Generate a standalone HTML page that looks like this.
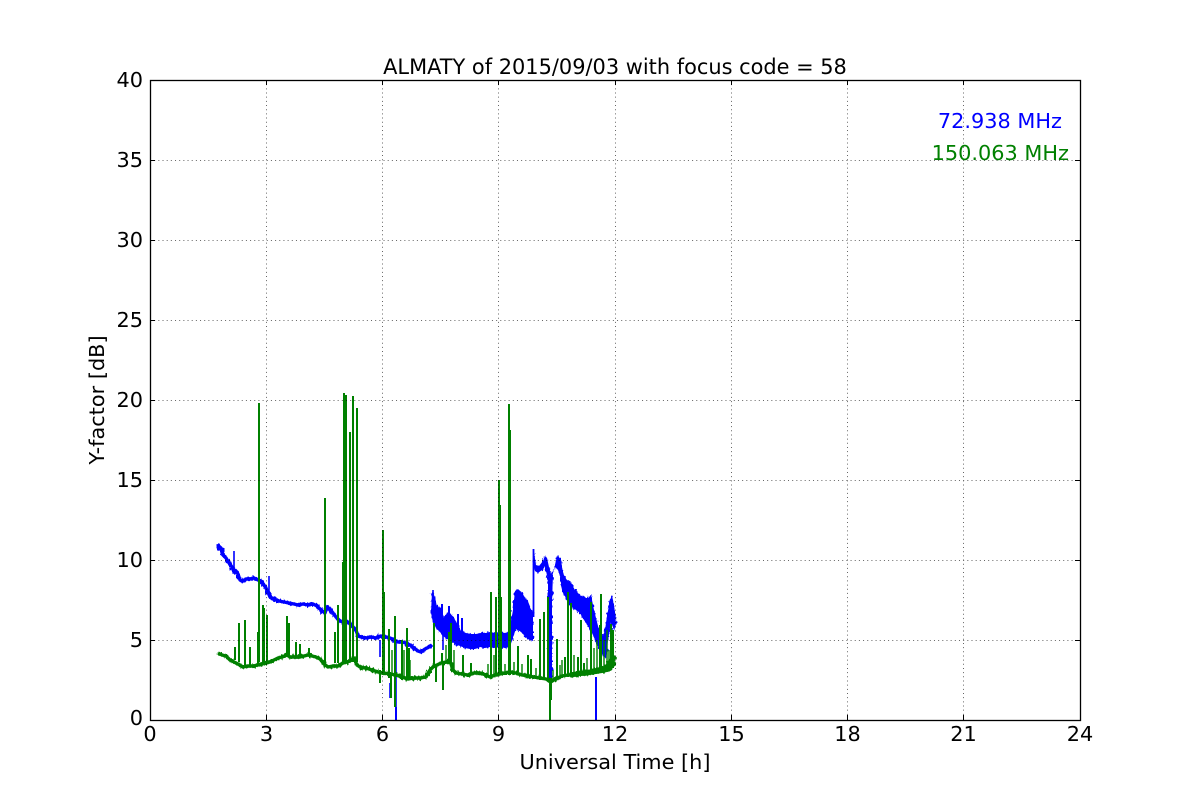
<!DOCTYPE html>
<html>
<head>
<meta charset="utf-8">
<style>
html,body{margin:0;padding:0;background:#fff;}
svg{display:block;}
text{font-family:"DejaVu Sans",sans-serif;fill:#000;}
</style>
</head>
<body>
<svg width="1200" height="800" viewBox="0 0 1200 800" xmlns="http://www.w3.org/2000/svg">
<defs>
<filter id="j" filterUnits="userSpaceOnUse" x="0" y="0" width="1200" height="800" color-interpolation-filters="sRGB">
<feTurbulence type="fractalNoise" baseFrequency="0.55 0.25" numOctaves="2" seed="4" result="n"/>
<feDisplacementMap in="SourceGraphic" in2="n" scale="6" xChannelSelector="R" yChannelSelector="G" result="d"/>
<feMerge><feMergeNode in="SourceGraphic"/><feMergeNode in="d"/></feMerge>
</filter>
</defs>
<rect width="1200" height="800" fill="#fff"/>

<!-- blue trace -->
<g filter="url(#j)">
<g fill="none" stroke="#0000ff" stroke-linejoin="round">
<path stroke-width="3.400" d="M218 544L219 549L221 548L223 555L226 558L229 563L232 567L234 572L236 571L238 574L240 580L243 581L246 579L250 579L254 578L258 580L261 581L264 585L267 590L270 597L274 599L279 601L284 602L289 603L294 604L298 605L303 604L308 605L313 604L317 606L321 610L325 613L327 607L330 609L333 613L336 617L340 621L344 622L349 623L353 627L356 630L358 636L361 637L366 638L371 637L376 638L381 636L386 637L390 638L394 640L398 642L402 642L406 643L410 645L414 648L418 651L421 652L425 649L429 647L432 645"/>
</g>
<g fill="#0000ff">
<path d="M431 613L432 592L435 597L437 607L441 608L444 618L447 613L450 613L454 618L458 625L461 631L466 633L471 634L476 634L481 633L486 633L490 632L495 633L500 632L505 633L509 632L513 610L515 591L518 589L522 593L526 599L528 601L530 608L533 612L533 641L528 639L524 635L520 631L516 629L513 637L510 647L505 648L500 647L495 648L490 647L485 648L480 647L475 649L470 649L465 648L460 646L455 644L450 640L447 639L443 636L440 632L436 628L433 622Z"/>
<path d="M534 552L536 565L539 566L543 561L545 556L547 558L549 567L551 574L554 570L556 560L558 555L561 561L563 573L566 579L571 583L574 589L578 593L581 596L585 598L588 598L591 595L594 610L597 622L600 634L603 636L605 630L607 616L610 600L612 595L615 612L616 624L614 630L611 622L608 640L606 658L603 656L600 650L596 642L592 633L588 626L584 620L580 613L576 610L572 607L568 603L564 594L562 590L560 576L558 570L555 567L553 573L551 584L549 585L545 566L542 570L538 573L535 571L533 564Z"/>
<path d="M548 575H553L552 600L552 678H548Z"/>
</g>
</g>
<g fill="none" stroke="#0000ff" stroke-linejoin="round">
<path stroke-width="1.600" d="M234 568V551M269 594V576M380 640V657M390 683V698M396 640V707M433 613V590M443 620V650"/>
<path stroke-width="2" d="M396 707V720M596 677V720M442 618V604M462 632V618M458 625V614M449 620V606"/>
<path stroke-width="1.800" d="M533.500 617V549"/>
</g>

<!-- green trace -->
<g fill="none" stroke="#008000" stroke-linejoin="round">
<path stroke-width="2" d="M259 662V403M344 662V393M346 662V395M350 662V432M353 662V396M357 662V408M325 665V498M499 675V480M500 675V505M509 675V404M510 675V430"/>
<path stroke-width="2" d="M235 660V647M239 662V623M245 665V620M250 666V647M258 665V632M263 665V605M264 665V608M267 663V615M287 657V616M289 657V623M296 657V642M300 657V644M309 656V648M335 663V632M338 663V605M343 662V562M383 675V530M384 675V592M389 678V629M395 678V616M402 680V640M407 680V628M409 680V648M434 668V623M442 664V653M451 664V623M449 664V632M463 675V655M471 675V663M491 677V592M496 675V597M501 675V597M518 672V646M528 677V655M531 677V659M540 680V619M544 680V612M548 680V597M557 680V639M565 677V657M568 677V592M571 675V603M581 675V620M578 675V657M584 675V663M591 672V602M600 672V625M601 672V594M611 670V624M613 668V630"/>
<path stroke-width="2" d="M380 670V683M395 675V707M391 675V698M436 665V682M443 662V690M550 678V720M551 678V700"/>
<path stroke-width="1.400" d="M446 664V645M454 670V650M392 675V650M404 676V650M410 678V660M488 676V664M494 676V655M505 675V664M514 675V662M522 676V664M536 678V668M553 680V670M560 679V665M562 678V660M574 676V655M587 675V658M594 673V648M597 673V640M604 672V640M607 670V630M609 670V650"/>
</g>
<g filter="url(#j)">
<g fill="none" stroke="#008000" stroke-linejoin="round">
<path stroke-width="3.400" d="M218 653L222 655L226 656L230 660L234 662L238 664L243 667L248 666L253 666L258 665L262 664L266 663L270 662L274 660L278 658L282 657L287 655L290 657L295 657L300 657L304 656L308 655L312 656L316 657L320 659L324 664L328 667L333 666L338 666L343 663L347 662L352 660L354 658L357 665L360 667L366 668L372 670L378 672L384 673L390 674L396 675L402 677L408 679L414 678L420 678L426 677L430 670L433 667L437 665L441 663L446 662L450 661L453 670L456 673L462 674L468 675L474 673L480 673L486 675L490 677L495 675L500 674L505 673L510 672L516 673L522 675L528 676L534 677L540 678L546 679L550 681L556 679L562 676L568 675L574 675L580 674L586 674L592 673L598 672L604 671L608 670L612 666L615 662"/>
<path stroke-width="5" d="M570 675L590 672L606 668L615 656"/>
</g>
</g>

<!-- grid -->
<g stroke="#000" stroke-width="1" stroke-dasharray="1 3.170" fill="none" opacity=".6">
<path d="M150 160.500H1080M150 240.500H1080M150 320.500H1080M150 400.500H1080M150 480.500H1080M150 560.500H1080M150 640.500H1080"/>
<path d="M266.500 80V720M382.500 80V720M498.500 80V720M615.500 80V720M731.500 80V720M847.500 80V720M963.500 80V720"/>
</g>

<!-- ticks -->
<g stroke="#000" stroke-width="1" fill="none">
<path d="M150 160.500h5M150 240.500h5M150 320.500h5M150 400.500h5M150 480.500h5M150 560.500h5M150 640.500h5"/>
<path d="M1080 160.500h-5M1080 240.500h-5M1080 320.500h-5M1080 400.500h-5M1080 480.500h-5M1080 560.500h-5M1080 640.500h-5"/>
<path d="M266.500 720v-5M382.500 720v-5M498.500 720v-5M615.500 720v-5M731.500 720v-5M847.500 720v-5M963.500 720v-5"/>
<path d="M266.500 80v5M382.500 80v5M498.500 80v5M615.500 80v5M731.500 80v5M847.500 80v5M963.500 80v5"/>
</g>

<!-- axes frame -->
<rect x="150.500" y="80.500" width="930" height="640" fill="none" stroke="#000" stroke-width="1.300"/>

<!-- annotations -->
<text x="1062" y="128" text-anchor="end" font-size="20.830" style="fill:#0000ff">72.938 MHz</text>
<text x="1069" y="160" text-anchor="end" font-size="20.830" style="fill:#008000">150.063 MHz</text>

<!-- title and axis labels -->
<text x="615" y="74" text-anchor="middle" font-size="20.900">ALMATY of 2015/09/03 with focus code = 58</text>
<text x="615" y="769" text-anchor="middle" font-size="20.830">Universal Time [h]</text>
<text x="104" y="400" text-anchor="middle" font-size="20.830" transform="rotate(-90 104 400)">Y-factor [dB]</text>

<!-- y tick labels -->
<g font-size="20.830" text-anchor="end">
<text x="143" y="87">40</text>
<text x="143" y="167">35</text>
<text x="143" y="247">30</text>
<text x="143" y="327">25</text>
<text x="143" y="407">20</text>
<text x="143" y="487">15</text>
<text x="143" y="567">10</text>
<text x="143" y="647">5</text>
<text x="143" y="725">0</text>
</g>

<!-- x tick labels -->
<g font-size="20.830" text-anchor="middle">
<text x="150" y="741">0</text>
<text x="266.500" y="741">3</text>
<text x="382.500" y="741">6</text>
<text x="498.500" y="741">9</text>
<text x="615" y="741">12</text>
<text x="731.500" y="741">15</text>
<text x="847.500" y="741">18</text>
<text x="963.500" y="741">21</text>
<text x="1080" y="741">24</text>
</g>
</svg>
</body>
</html>
